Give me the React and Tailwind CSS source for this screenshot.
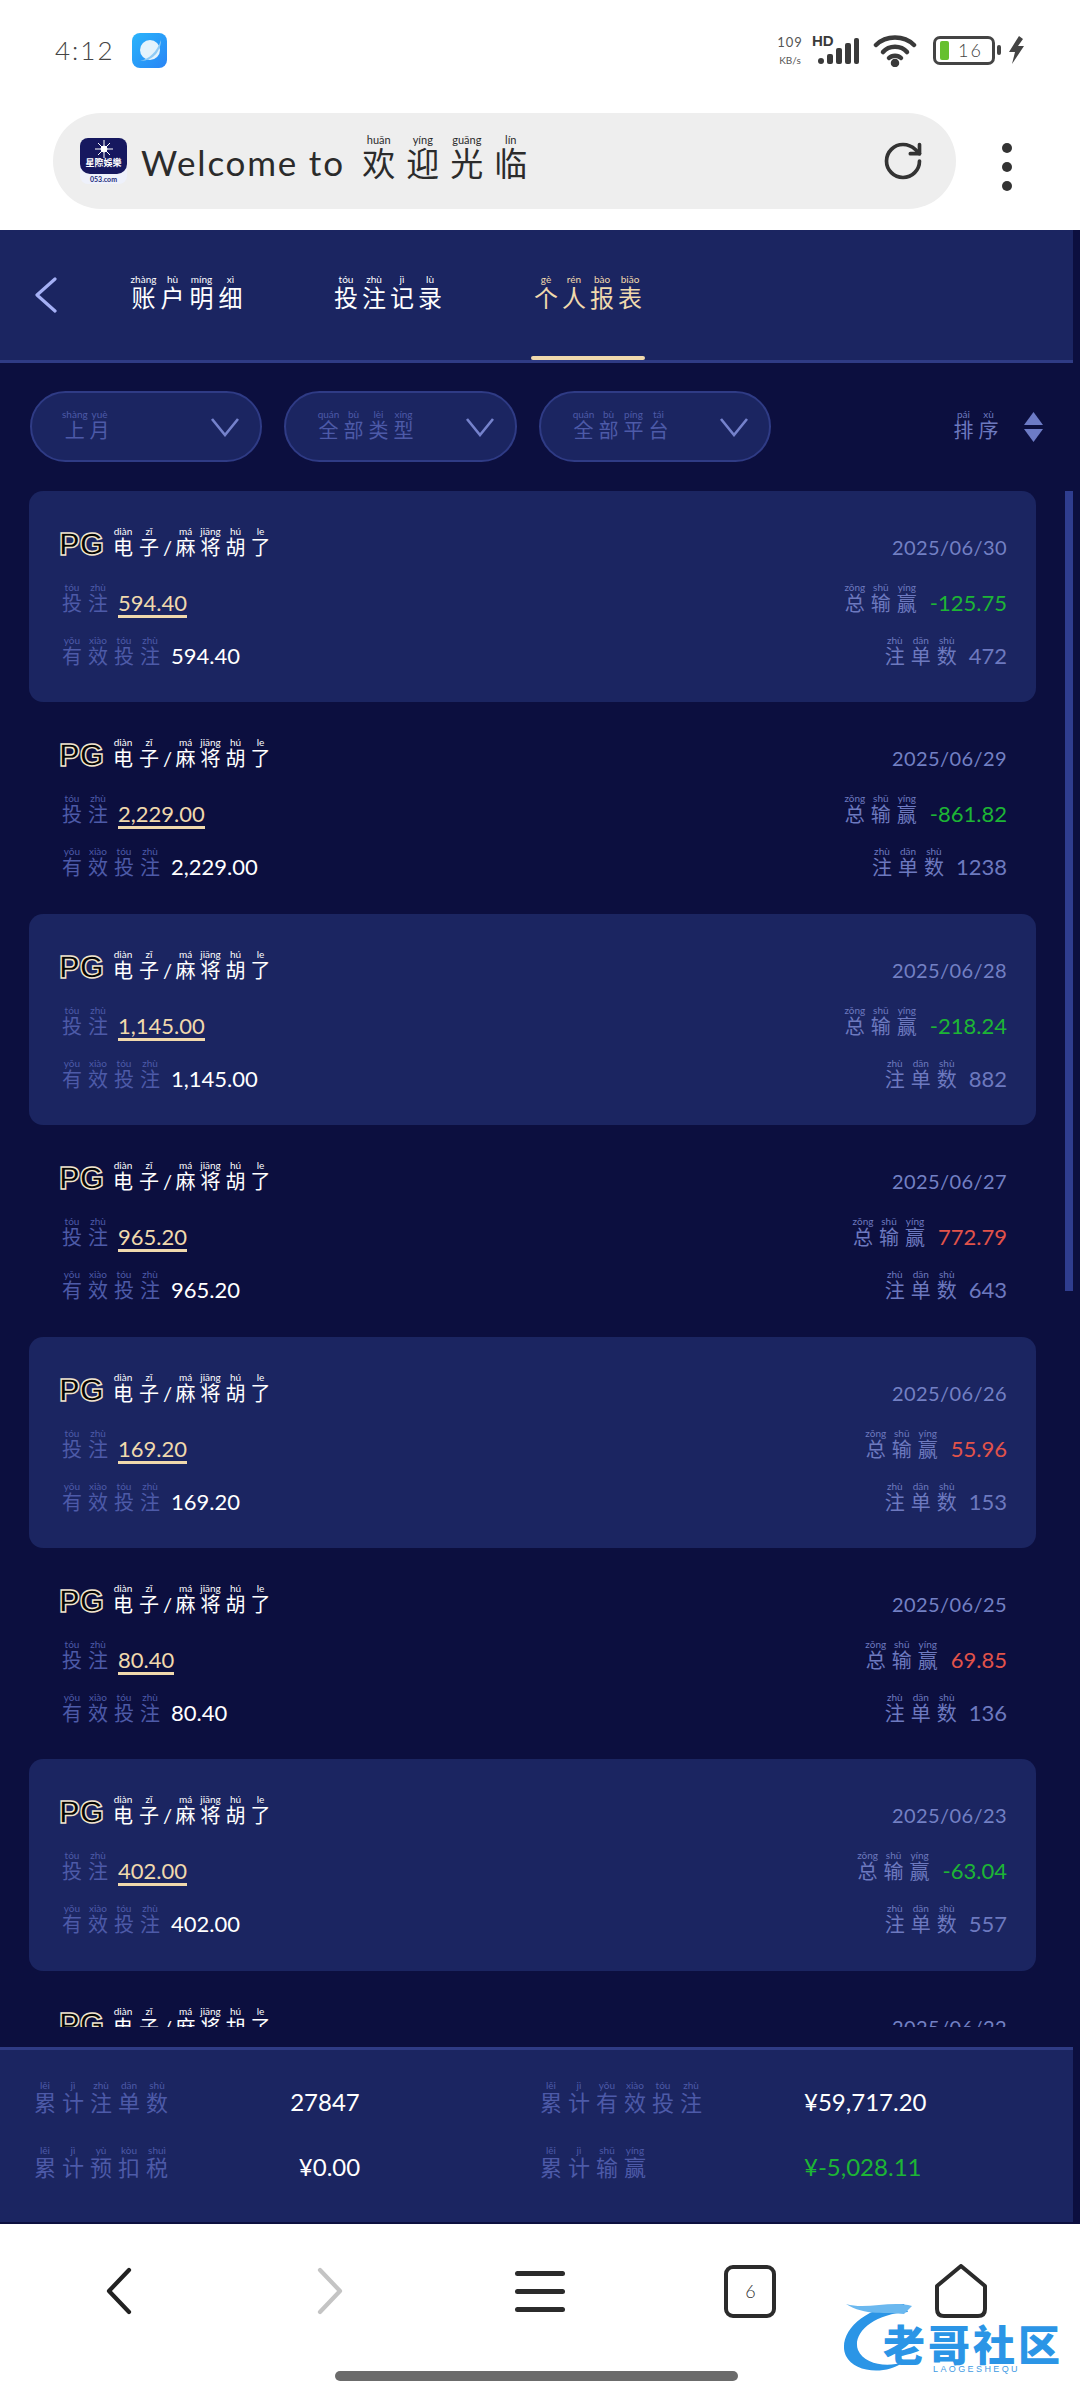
import React from 'react';
import { RotateCw } from 'lucide-react';

const FONT = "font-['Lato','Noto_Sans_CJK_SC',sans-serif]";

// one line of hanzi, every char with its pinyin on top
const Py = ({ text, py, pitch = 'w-[26px]', size = 'text-[20px]', rt = 'text-[10px]' }) => {
  const tones = py.split(' ');
  return (
    <span className="inline-flex items-baseline whitespace-nowrap">
      {text.split('').map((ch, i) => (
        <span key={i} className={`inline-block text-center ${pitch} ${size}`}>
          <ruby>
            {ch}
            <rt className={`${rt} leading-[11px] font-normal`}>{tones[i]}</rt>
          </ruby>
        </span>
      ))}
    </span>
  );
};

const records = [
  { bet: '594.40', date: '2025/06/30', win: '-125.75', count: '472' },
  { bet: '2,229.00', date: '2025/06/29', win: '-861.82', count: '1238' },
  { bet: '1,145.00', date: '2025/06/28', win: '-218.24', count: '882' },
  { bet: '965.20', date: '2025/06/27', win: '772.79', count: '643' },
  { bet: '169.20', date: '2025/06/26', win: '55.96', count: '153' },
  { bet: '80.40', date: '2025/06/25', win: '69.85', count: '136' },
  { bet: '402.00', date: '2025/06/23', win: '-63.04', count: '557' },
  { bet: '318.60', date: '2025/06/22', win: '-40.12', count: '402' },
];

const StatusBar = () => (
  <div className="h-[70px] flex items-center pl-[55px] pr-[55px] pt-[30px] text-[#444]">
    <span className="text-[26px] tracking-[2px] font-light">4:12</span>
    <span className="ml-[18px] w-[35px] h-[35px] rounded-[8px] bg-gradient-to-br from-[#2ab4fb] to-[#2a84f5] flex items-center justify-center">
      <svg width="26" height="26" viewBox="0 0 26 26">
        <circle cx="13" cy="13" r="10" fill="#e4f3fc" />
        <path d="M3 24 C 12 22 20 15 24 3 C 24 12 18 24 3 24 Z" fill="#8fcbf5" />
      </svg>
    </span>
    <div className="ml-auto flex items-center">
      <div className="flex flex-col items-center w-[30px] text-[#555] leading-none">
        <span className="text-[13px] tracking-[1px]">109</span>
        <span className="text-[10px] mt-[6px]">KB/s</span>
      </div>
      <svg className="ml-[6px]" width="50" height="32" viewBox="0 0 50 32" fill="#3a3a3a">
        <text x="1" y="12" fontSize="15" fontWeight="800" fontFamily="Liberation Sans">HD</text>
        <rect x="7" y="24" width="6" height="6" rx="3" />
        <rect x="16" y="20" width="6" height="10" rx="2" />
        <rect x="25" y="14" width="6" height="16" rx="2" />
        <rect x="34" y="9" width="6" height="21" rx="2" />
        <rect x="43" y="4" width="5" height="26" rx="2" />
      </svg>
      <svg className="ml-[12px]" width="44" height="33" viewBox="0 0 44 33" fill="none" stroke="#3a3a3a" strokeWidth="4.5" strokeLinecap="round">
        <path d="M3 11 C 13 1 31 1 41 11" />
        <path d="M10 18 C 16 11 28 11 34 18" />
        <path d="M16 24 C 19 21 25 21 28 24" />
        <circle cx="22" cy="29" r="2" fill="#3a3a3a" />
      </svg>
      <div className="ml-[16px] w-[62px] h-[29px] rounded-[7px] border-[3px] border-[#444] flex items-center pl-[4px]">
        <span className="w-[9px] h-[19px] rounded-[2px] bg-[#66c02e]" />
        <span className="ml-[9px] text-[18px] font-light tracking-[2px] leading-none">16</span>
      </div>
      <span className="ml-[2px] w-[4px] h-[10px] rounded-[2px] bg-[#444]" />
      <svg className="ml-[7px]" width="17" height="28" viewBox="0 0 17 28" fill="#444">
        <path d="M11 0 L1 16 L7 16 L4 28 L16 10 L10 10 L15 3 Z" />
      </svg>
    </div>
  </div>
);

const AddressBar = () => (
  <div className="h-[160px] flex items-start pl-[53px] pt-[43px]">
    <div className="w-[903px] h-[96px] rounded-[48px] bg-[#eeeeee] flex items-center pl-[27px] pr-[31px]">
      <div className="w-[47px] h-[46px] rounded-[8px] overflow-hidden bg-[#eef1fb] flex flex-col items-center">
        <div className="w-full h-[36px] bg-[#16185f] rounded-b-[10px] flex flex-col items-center">
          <svg className="mt-[2px]" width="18" height="18" viewBox="0 0 18 18" stroke="#fff" strokeWidth="1">
            <path d="M9 0 V18 M0 9 H18 M3 3 L15 15 M15 3 L3 15" />
            <circle cx="9" cy="9" r="3" fill="#fff" />
          </svg>
          <span className="text-[9px] leading-[10px] font-bold text-white whitespace-nowrap">星際娛樂</span>
        </div>
        <span className="text-[7px] leading-[10px] font-bold text-[#1d2a7a]">053.com</span>
      </div>
      <span className="ml-[14px] text-[35px] text-[#2b2b2b] tracking-[1.8px] leading-none pt-[2px]">Welcome to</span>
      <span className="ml-[12px] text-[#2b2b2b]">
        <Py text="欢迎光临" py="huān yíng guāng lín" pitch="w-[44px]" size="text-[33px]" rt="text-[11px]" />
      </span>
      <RotateCw className="ml-auto text-[#333]" size={44} strokeWidth={2} />
    </div>
    <div className="ml-[46px] mt-[30px] flex flex-col gap-[9px]">
      <span className="w-[10px] h-[10px] rounded-full bg-[#333]" />
      <span className="w-[10px] h-[10px] rounded-full bg-[#333]" />
      <span className="w-[10px] h-[10px] rounded-full bg-[#333]" />
    </div>
  </div>
);

const Tabs = () => (
  <div className="relative h-[133px] w-[1073px] bg-[#1b2561] border-b-[3px] border-[#2f3b85] flex items-center text-white">
    <svg className="ml-[34px]" width="24" height="36" viewBox="0 0 24 36" fill="none" stroke="#a5b0f5" strokeWidth="3.2" strokeLinecap="round" strokeLinejoin="round">
      <path d="M21 2 L3 18 L21 34" />
    </svg>
    <div className="ml-[71px] w-[203px]">
      <Py text="账户明细" py="zhàng hù míng xì" pitch="w-[29px]" size="text-[24px]" />
    </div>
    <div className="w-[200px]">
      <Py text="投注记录" py="tóu zhù jì lù" pitch="w-[28px]" size="text-[24px]" />
    </div>
    <div className="relative text-[#f0d9ad]">
      <Py text="个人报表" py="gè rén bào biǎo" pitch="w-[28px]" size="text-[24px]" />
    </div>
    <span className="absolute left-[531px] bottom-[0px] w-[114px] h-[4px] rounded-[2px] bg-[#f0d9ad]" />
  </div>
);

const Filter = ({ text, py, className }) => (
  <div className={`h-[71px] rounded-[36px] border-[2px] border-[#2f3b85] bg-[#1b2561] flex items-center justify-between pl-[30px] pr-[20px] text-[#4d5aa8] ${className}`}>
    <Py text={text} py={py} pitch="w-[25px]" />
    <svg width="30" height="20" viewBox="0 0 30 20" fill="none" stroke="#7582cc" strokeWidth="2.6">
      <path d="M2 2 L15 18 L28 2" />
    </svg>
  </div>
);

const Filters = () => (
  <div className="flex items-center pl-[30px] pt-[28px] pb-[29px] w-[1073px]">
    <Filter text="上月" py="shàng yuè" className="w-[232px]" />
    <Filter text="全部类型" py="quán bù lèi xíng" className="w-[233px] ml-[22px]" />
    <Filter text="全部平台" py="quán bù píng tái" className="w-[232px] ml-[22px]" />
    <div className="ml-auto mr-[30px] flex items-center text-[#6d79bf]">
      <Py text="排序" py="pái xù" pitch="w-[25px]" />
      <div className="ml-[23px] flex flex-col gap-[4px]">
        <svg width="19" height="13" viewBox="0 0 19 13" fill="#6d7bc6"><path d="M9.5 0 L19 13 H0 Z" /></svg>
        <svg width="19" height="13" viewBox="0 0 19 13" fill="#6d7bc6"><path d="M9.5 13 L19 0 H0 Z" /></svg>
      </div>
    </div>
  </div>
);

const RecordCard = ({ rec, shaded }) => {
  const lost = rec.win.startsWith('-');
  return (
    <div className={`h-[211.4px] rounded-[14px] pl-[30px] pr-[29px] pt-[35px] flex flex-col ${shaded ? 'bg-[#1b2561]' : ''}`}>
      <div className="h-[56px] flex items-baseline justify-between">
        <div className="flex items-baseline text-white">
          <span className="w-[54px] text-[31px] font-black leading-none text-[#050505] [-webkit-text-stroke:1.4px_#f2e6d0] font-['Liberation_Sans',sans-serif]">PG</span>
          <span className="-ml-[3px] inline-flex items-baseline">
            <Py text="电子" py="diàn zǐ" pitch="w-[26px]" />
            <span className="text-[20px] mx-[1px]">/</span>
            <Py text="麻将胡了" py="má jiāng hú le" pitch="w-[25px]" />
          </span>
        </div>
        <span className="text-[20px] text-[#7380c4] tracking-[0.4px]">{rec.date}</span>
      </div>
      <div className="h-[53px] flex items-baseline justify-between">
        <div className="flex items-baseline text-[#4d5aa8]">
          <Py text="投注" py="tóu zhù" />
          <span className="ml-[7px] text-[22px] text-[#f0d9ad] border-b-[3px] border-[#f0d9ad] leading-[25px]">{rec.bet}</span>
        </div>
        <div className="flex items-baseline text-[#6d79bf]">
          <Py text="总输赢" py="zǒng shū yíng" />
          <span className={`ml-[10px] text-[22px] ${lost ? 'text-[#1db535]' : 'text-[#e2534a]'}`}>{rec.win}</span>
        </div>
      </div>
      <div className="h-[50px] flex items-baseline justify-between">
        <div className="flex items-baseline text-[#4d5aa8]">
          <Py text="有效投注" py="yǒu xiào tóu zhù" />
          <span className="ml-[8px] text-[22px] text-white">{rec.bet}</span>
        </div>
        <div className="flex items-baseline text-[#6d79bf]">
          <Py text="注单数" py="zhù dān shù" />
          <span className="ml-[9px] text-[22px]">{rec.count}</span>
        </div>
      </div>
    </div>
  );
};

const Summary = () => (
  <div className="h-[175px] w-[1073px] bg-[#1b2561] border-t-[3px] border-[#2f3b85] pl-[31px] pt-[30px]">
    <div className="grid grid-cols-[233px_122px_151px_267px_auto] grid-rows-[65px_65px] items-baseline text-[#4d5aa8]">
      <Py text="累计注单数" py="lěi jì zhù dān shù" pitch="w-[28px]" size="text-[22px]" />
      <span className="text-center text-[24px] text-white">27847</span>
      <span className="col-start-4"><Py text="累计有效投注" py="lěi jì yǒu xiào tóu zhù" pitch="w-[28px]" size="text-[22px]" /></span>
      <span className="text-[24px] text-white">¥59,717.20</span>
      <Py text="累计预扣税" py="lěi jì yù kòu shuì" pitch="w-[28px]" size="text-[22px]" />
      <span className="text-center text-[24px] text-white pl-[9px]">¥0.00</span>
      <span className="col-start-4"><Py text="累计输赢" py="lěi jì shū yíng" pitch="w-[28px]" size="text-[22px]" /></span>
      <span className="text-[24px] text-[#1db535]">¥-5,028.11</span>
    </div>
  </div>
);

const BottomNav = () => (
  <div className="relative h-[176px]">
    <div className="grid grid-cols-5 px-[14px] pt-[40px] items-center">
      <div className="flex justify-center">
        <svg width="26" height="48" viewBox="0 0 26 48" fill="none" stroke="#222" strokeWidth="4.2" strokeLinecap="round" strokeLinejoin="round">
          <path d="M23 3 L3 24 L23 45" />
        </svg>
      </div>
      <div className="flex justify-center">
        <svg width="26" height="48" viewBox="0 0 26 48" fill="none" stroke="#c4c4c4" strokeWidth="4.2" strokeLinecap="round" strokeLinejoin="round">
          <path d="M3 3 L23 24 L3 45" />
        </svg>
      </div>
      <div className="flex justify-center">
        <div className="flex flex-col gap-[13px]">
          <span className="block w-[50px] h-[5px] rounded-[3px] bg-[#2b2b2b]" />
          <span className="block w-[50px] h-[5px] rounded-[3px] bg-[#2b2b2b]" />
          <span className="block w-[50px] h-[5px] rounded-[3px] bg-[#2b2b2b]" />
        </div>
      </div>
      <div className="flex justify-center">
        <div className="w-[52px] h-[53px] rounded-[9px] border-[4px] border-[#2b2b2b] flex items-center justify-center text-[18px] text-[#333] font-light">6</div>
      </div>
      <div className="flex justify-center">
        <svg width="54" height="54" viewBox="0 0 54 54" fill="none" stroke="#2b2b2b" strokeWidth="4" strokeLinejoin="round">
          <path d="M27 2 L51 22 V45 Q51 52 44 52 H10 Q3 52 3 45 V22 Z" />
        </svg>
      </div>
    </div>
    <div className="absolute left-[335px] top-[147px] w-[403px] h-[10px] rounded-[5px] bg-[#6b6b6b]" />
    {/* watermark */}
    <div className="absolute left-[842px] top-[76px] w-[224px] h-[74px]">
      <svg className="absolute left-0 top-0" width="100" height="74" viewBox="0 0 100 74">
        <path d="M62 4 C 22 6 -6 34 4 56 C 12 72 42 76 62 62 C 44 68 22 64 16 50 C 10 34 30 14 66 12 Z" fill="#2b95e6" />
        <path d="M4 4 C 24 10 50 0 70 6 L 62 14 C 46 12 22 16 4 4 Z" fill="#6bb8ef" />
      </svg>
      <span className="absolute left-[41px] top-[21px] whitespace-nowrap text-[42px] leading-[48px] tracking-[3px] font-black text-[#2b95e6]">老哥社区</span>
      <span className="absolute left-[91px] top-[64px] text-[9px] leading-[10px] tracking-[2.4px] text-[#3f9be3] font-['Liberation_Sans',sans-serif]">LAOGESHEQU</span>
    </div>
  </div>
);

export default function App() {
  return (
    <div className={`w-[1080px] h-[2400px] bg-white flex flex-col overflow-hidden ${FONT}`}>
      <StatusBar />
      <AddressBar />
      <div className="relative h-[1994px] bg-[#0c0f3f] flex flex-col">
        <Tabs />
        <Filters />
        <div className="flex-1 min-h-0 overflow-hidden w-[1007px] ml-[29px] mb-[20px] flex flex-col">
          {records.map((rec, i) => (
            <div key={rec.date} className="shrink-0">
              <RecordCard rec={rec} shaded={i % 2 === 0} />
            </div>
          ))}
        </div>
        {/* scroll thumb */}
        <div className="absolute left-[1065px] top-[261px] w-[8px] h-[800px] bg-[#2f3d8f]" />
        <Summary />
        <div className="h-[2px]" />
      </div>
      <BottomNav />
    </div>
  );
}
